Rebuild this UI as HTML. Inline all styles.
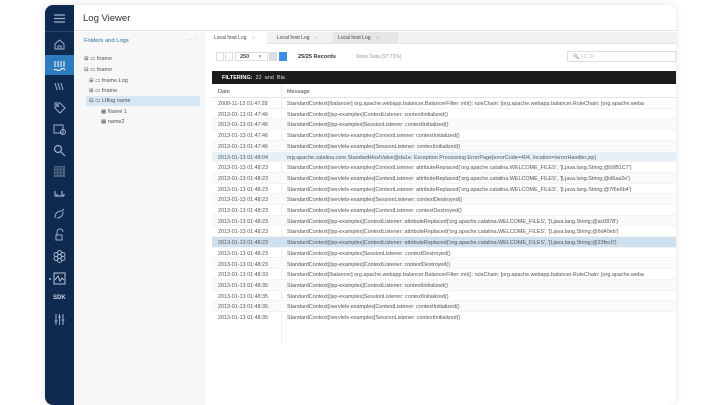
<!DOCTYPE html>
<html><head><meta charset="utf-8"><style>
*{margin:0;padding:0;box-sizing:border-box}
body{width:728px;height:400px;background:#fff;font-family:"Liberation Sans",sans-serif;position:relative;overflow:hidden;color:#444}
.frame{position:absolute;left:45px;top:5px;width:631px;height:400px;border-radius:8px;overflow:hidden;box-shadow:0 0 8px rgba(0,0,0,.12);background:#fff}
.side{position:absolute;left:0;top:0;width:29px;height:100%;background:#0e2a4f}
.ic{position:absolute;left:7px;width:15px;height:15px}
.act{position:absolute;left:0;top:50px;width:29px;height:20px;background:#2f7bc0}
.hdr{position:absolute;left:29px;top:0;right:0;height:26px;border-bottom:1px solid #dbe5e5;font-size:9.5px;color:#333;padding:8px 0 0 9px}
.tree{position:absolute;left:29px;top:27px;width:131px;bottom:0;background:#f7f7f7;font-size:5.5px;color:#555}
.main{position:absolute;left:160px;top:27px;right:0;bottom:0;background:#fff}
.t{position:absolute;white-space:nowrap}
.row{position:absolute;left:0;right:0;height:10.7px;font-size:5.4px;color:#555;white-space:nowrap;border-bottom:1px solid #f3f3f3}
.row span{position:absolute;top:3px}
</style></head><body>
<div class="frame">
<div class="side">
 <svg class="ic" style="top:6px;left:7px" viewBox="0 0 15 15" stroke="#9fb0c8" stroke-width="1.2"><path d="M2 4h11M2 7.5h11M2 11h11"/></svg>
 <div style="position:absolute;left:0;top:26px;width:29px;height:1px;background:#25446b"></div>
 <svg class="ic" style="top:32px" viewBox="0 0 15 15" fill="none" stroke="#9fb0c8" stroke-width="1"><path d="M3 7L7.5 3 12 7v5H3z"/><path d="M6 12V9h3v3"/></svg>
 <div class="act"></div>
 <svg class="ic" style="top:53px" viewBox="0 0 15 15" fill="none" stroke="#fff" stroke-width="1"><path d="M3 3v6M6 3v6M9 3v6M12 3v6M2 12c2-2 4 2 6 0s4-2 5 0"/></svg>
 <svg class="ic" style="top:74px" viewBox="0 0 15 15" fill="none" stroke="#9fb0c8" stroke-width="1"><path d="M3 4l2 7M6 4l2 7M9 4l2 7"/></svg>
 <svg class="ic" style="top:95px" viewBox="0 0 15 15" fill="none" stroke="#9fb0c8" stroke-width="1"><path d="M3 3h5l5 5-5 5-5-5z"/><circle cx="5.5" cy="5.5" r="1"/></svg>
 <svg class="ic" style="top:117px" viewBox="0 0 15 15" fill="none" stroke="#9fb0c8" stroke-width="1"><rect x="2" y="3" width="9" height="8"/><circle cx="11" cy="10" r="2.5"/></svg>
 <svg class="ic" style="top:138px" viewBox="0 0 15 15" fill="none" stroke="#9fb0c8" stroke-width="1.2"><circle cx="6" cy="6" r="3.5"/><path d="M8.5 8.5L13 13"/></svg>
 <svg class="ic" style="top:159px" viewBox="0 0 15 15" fill="#9fb0c8"><path d="M2 2h11v11H2z" opacity=".55"/><path d="M4 2v11M7 2v11M10 2v11M2 4h11M2 7h11M2 10h11" stroke="#0e2a4f" stroke-width=".8"/></svg>
 <svg class="ic" style="top:180px" viewBox="0 0 15 15" fill="none" stroke="#9fb0c8" stroke-width="1.2"><path d="M3 6v5M5 9v2M10 6v5M12 9v2M3 11h9"/></svg>
 <svg class="ic" style="top:201px" viewBox="0 0 15 15" fill="none" stroke="#9fb0c8" stroke-width="1"><path d="M3 12c0-5 3-7 7-7l2-2M5 12c3 0 6-2 6-6"/></svg>
 <svg class="ic" style="top:222px" viewBox="0 0 15 15" fill="none" stroke="#9fb0c8" stroke-width="1"><rect x="4" y="8" width="6" height="5"/><path d="M5 8V5a3 3 0 016 0"/></svg>
 <svg class="ic" style="top:244px" viewBox="0 0 15 15" fill="none" stroke="#9fb0c8" stroke-width="1"><circle cx="7.5" cy="7.5" r="2"/><circle cx="7.5" cy="3.5" r="2"/><circle cx="7.5" cy="11.5" r="2"/><circle cx="4" cy="5.5" r="2"/><circle cx="11" cy="5.5" r="2"/><circle cx="4" cy="9.5" r="2"/><circle cx="11" cy="9.5" r="2"/></svg>
 <div style="position:absolute;left:4px;top:273px;width:2px;height:2px;background:#5aa0e0"></div>
 <svg class="ic" style="top:266px" viewBox="0 0 15 15" fill="none" stroke="#b8c6d8" stroke-width="1"><rect x="2" y="2" width="11" height="11"/><path d="M3 9l3-4 2 5 2-3 2 2"/></svg>
 <div class="t" style="left:8px;top:290px;font-size:6px;font-weight:bold;color:#c7d2e2">SDK</div>
 <svg class="ic" style="top:307px" viewBox="0 0 15 15" fill="none" stroke="#9fb0c8" stroke-width="1"><path d="M4 2v11M7.5 2v11M11 2v11M2.5 9h3M6 5h3M9.5 8h3"/></svg>
</div>
<div class="hdr">Log Viewer</div>
<div class="tree">
 <div class="t" style="left:10px;top:6px;color:#2e6ea8;font-size:5.8px">Folders and Logs</div>
 <div class="t" style="left:113px;top:5px;color:#bbb">··· ›</div>
 <div class="t" style="left:10px;top:24px">⊞ ▭ fname</div>
 <div class="t" style="left:10px;top:35px">⊟ ▭ fname</div>
 <div class="t" style="left:15px;top:46px">⊞ ▭ fname.Log</div>
 <div class="t" style="left:15px;top:56px">⊞ ▭ fname</div>
 <div style="position:absolute;left:12px;top:64px;width:114px;height:10px;background:#d6e6f2"></div>
 <div class="t" style="left:15px;top:66px">⊟ ▭ LIflog name</div>
 <div class="t" style="left:27px;top:77px">▦ Name 1</div>
 <div class="t" style="left:27px;top:87px">▦ name2</div>
</div>
<div class="main">
 <div style="position:absolute;left:0;top:0;right:0;height:12px;background:#f2f2f2;border-bottom:1px solid #e2e2e2"></div>
 <div style="position:absolute;left:0;top:0;width:62px;height:12px;background:#fff"></div>
 <div style="position:absolute;left:128px;top:0;width:65px;height:12px;background:#e6e6e6"></div>
 <div class="t" style="left:9px;top:3px;font-size:5px">Local host Log&nbsp;&nbsp;&nbsp;&nbsp;◌</div>
 <div class="t" style="left:72px;top:3px;font-size:5px">Local host Log&nbsp;&nbsp;&nbsp;&nbsp;◌</div>
 <div class="t" style="left:133px;top:3px;font-size:5px">Local host Log&nbsp;&nbsp;&nbsp;&nbsp;◌</div>
 <div style="position:absolute;left:11px;top:20px;width:8px;height:9px;border:1px solid #ddd"></div>
 <div style="position:absolute;left:20px;top:20px;width:8px;height:9px;border:1px solid #ddd"></div>
 <div style="position:absolute;left:30px;top:20px;width:33px;height:9px;border:1px solid #ddd;font-size:5.5px;font-weight:bold;padding:1px 0 0 4px">250 <span style="font-weight:normal;color:#999;margin-left:8px">▾</span></div>
 <div style="position:absolute;left:64px;top:20px;width:8px;height:9px;background:#d7dde3"></div>
 <div style="position:absolute;left:74px;top:20px;width:8px;height:9px;background:#3b8ee0"></div>
 <div class="t" style="left:93px;top:22px;font-size:5.6px;font-weight:bold;color:#333">25/25 Records</div>
 <div class="t" style="left:151px;top:22px;font-size:5px;color:#999">Store Data (97.73%)</div>
 <div style="position:absolute;left:362px;top:19px;right:0;height:11px;border:1px solid #ddd;font-size:5px;color:#ccc;padding:2px 0 0 5px">🔍 FILTR</div>
 <div style="position:absolute;left:7px;top:39px;right:0;height:13px;background:#1c1c1c;font-size:5.5px;color:#ddd;padding:4px 0 0 10px"><b style="color:#fff">FILTERING:</b>&nbsp;&nbsp;22&nbsp;&nbsp;and&nbsp;&nbsp;Bla</div>
 <div class="t" style="left:13px;top:57px;font-size:5.6px">Date</div>
 <div class="t" style="left:82px;top:57px;font-size:5.6px">Message</div>
 <div style="position:absolute;left:7px;top:65px;right:0;height:1px;background:#e5e5e5"></div>
 <div style="position:absolute;left:76px;top:52px;width:1px;height:260px;background:#eee"></div>
 <div style="position:absolute;left:7px;top:66px;right:0;height:214px">
  <div class="row" style="top:0"><span style="left:6px">2008-11-13 01:47:28</span><span style="left:75px">StandardContext[/balancer] org.apache.webapp.balancer.BalancerFilter: init(): ruleChain: [org.apache.webapp.balancer.RuleChain: [org.apache.weba</span></div>
  <div class="row" style="top:10.7px"><span style="left:6px">2013-01-13 01:47:46</span><span style="left:75px">StandardContext[/jsp-examples]ContextListener: contextInitialized()</span></div>
  <div class="row" style="top:21.4px;background:#fafafa"><span style="left:6px">2013-01-13 01:47:46</span><span style="left:75px">StandardContext[/jsp-examples]SessionListener: contextInitialized()</span></div>
  <div class="row" style="top:32.1px"><span style="left:6px">2013-01-13 01:47:46</span><span style="left:75px">StandardContext[/servlets-examples]ContextListener: contextInitialized()</span></div>
  <div class="row" style="top:42.8px;background:#fafafa"><span style="left:6px">2013-01-13 01:47:46</span><span style="left:75px">StandardContext[/servlets-examples]SessionListener: contextInitialized()</span></div>
  <div class="row" style="top:53.5px;background:#e6f0f8"><span style="left:6px">2013-01-13 01:48:04</span><span style="left:75px">org.apache.catalina.core.StandardHostValve@da1e: Exception Processing ErrorPage[errorCode=404, location=/errorHandler.jsp]</span></div>
  <div class="row" style="top:64.2px"><span style="left:6px">2013-01-13 01:48:23</span><span style="left:75px">StandardContext[/servlets-examples]ContextListener: attributeReplaced('org.apache.catalina.WELCOME_FILES', '[Ljava.lang.String;@b9B1C7')</span></div>
  <div class="row" style="top:74.9px;background:#fafafa"><span style="left:6px">2013-01-13 01:48:23</span><span style="left:75px">StandardContext[/servlets-examples]ContextListener: attributeReplaced('org.apache.catalina.WELCOME_FILES', '[Ljava.lang.String;@d6aa2e')</span></div>
  <div class="row" style="top:85.6px"><span style="left:6px">2013-01-13 01:48:23</span><span style="left:75px">StandardContext[/servlets-examples]ContextListener: attributeReplaced('org.apache.catalina.WELCOME_FILES', '[Ljava.lang.String;@7f6e6b4')</span></div>
  <div class="row" style="top:96.3px;background:#fafafa"><span style="left:6px">2013-01-13 01:48:23</span><span style="left:75px">StandardContext[/servlets-examples]SessionListener: contextDestroyed()</span></div>
  <div class="row" style="top:107px"><span style="left:6px">2013-01-13 01:48:23</span><span style="left:75px">StandardContext[/servlets-examples]ContextListener: contextDestroyed()</span></div>
  <div class="row" style="top:117.7px;background:#fafafa"><span style="left:6px">2013-01-13 01:48:23</span><span style="left:75px">StandardContext[/jsp-examples]ContextListener: attributeReplaced('org.apache.catalina.WELCOME_FILES', '[Ljava.lang.String;@ac0878')</span></div>
  <div class="row" style="top:128.4px"><span style="left:6px">2013-01-13 01:48:23</span><span style="left:75px">StandardContext[/jsp-examples]ContextListener: attributeReplaced('org.apache.catalina.WELCOME_FILES', '[Ljava.lang.String;@6d40eb')</span></div>
  <div class="row" style="top:139.1px;background:#cfe0ef"><span style="left:6px">2013-01-13 01:48:23</span><span style="left:75px">StandardContext[/jsp-examples]ContextListener: attributeReplaced('org.apache.catalina.WELCOME_FILES', '[Ljava.lang.String;@23fec0')</span></div>
  <div class="row" style="top:149.8px"><span style="left:6px">2013-01-13 01:48:23</span><span style="left:75px">StandardContext[/jsp-examples]SessionListener: contextDestroyed()</span></div>
  <div class="row" style="top:160.5px;background:#fafafa"><span style="left:6px">2013-01-13 01:48:23</span><span style="left:75px">StandardContext[/jsp-examples]ContextListener: contextDestroyed()</span></div>
  <div class="row" style="top:171.2px"><span style="left:6px">2013-01-13 01:48:33</span><span style="left:75px">StandardContext[/balancer] org.apache.webapp.balancer.BalancerFilter: init(): ruleChain: [org.apache.webapp.balancer.RuleChain: [org.apache.weba</span></div>
  <div class="row" style="top:181.9px;background:#fafafa"><span style="left:6px">2013-01-13 01:48:35</span><span style="left:75px">StandardContext[/jsp-examples]ContextListener: contextInitialized()</span></div>
  <div class="row" style="top:192.6px"><span style="left:6px">2013-01-13 01:48:35</span><span style="left:75px">StandardContext[/jsp-examples]SessionListener: contextInitialized()</span></div>
  <div class="row" style="top:203.3px;background:#fafafa"><span style="left:6px">2013-01-13 01:48:35</span><span style="left:75px">StandardContext[/servlets-examples]ContextListener: contextInitialized()</span></div>
  <div class="row" style="top:214px;border:0"><span style="left:6px">2013-01-13 01:48:35</span><span style="left:75px">StandardContext[/servlets-examples]SessionListener: contextInitialized()</span></div>
 </div>
</div>
</div>
</body></html>
